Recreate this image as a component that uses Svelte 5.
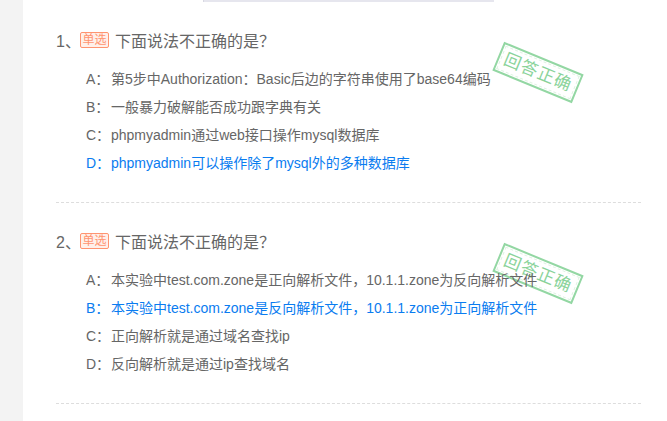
<script>
  const questions = [
    { n: 1, answer: 'D', options: [
      ['A', '第5步中Authorization：Basic后边的字符串使用了base64编码'],
      ['B', '一般暴力破解能否成功跟字典有关'],
      ['C', 'phpmyadmin通过web接口操作mysql数据库'],
      ['D', 'phpmyadmin可以操作除了mysql外的多种数据库']
    ]},
    { n: 2, answer: 'B', options: [
      ['A', '本实验中test.com.zone是正向解析文件，10.1.1.zone为反向解析文件'],
      ['B', '本实验中test.com.zone是反向解析文件，10.1.1.zone为正向解析文件'],
      ['C', '正向解析就是通过域名查找ip'],
      ['D', '反向解析就是通过ip查找域名']
    ]}
  ];
</script>

<div class="page">
  <aside class="side"></aside>
  <main class="main">
    <div class="topbox"></div>
    {#each questions as q}
      <section class="q">
        <div class="stamp"><span>回答正确</span></div>
        <h3 class="title"><span class="num">{q.n}、</span><span class="tag">单选</span><span class="text">下面说法不正确的是？</span></h3>
        <ul class="opts">
          {#each q.options as o}
            <li class:right={o[0] === q.answer}><span class="key">{o[0]}：</span><span>{o[1]}</span></li>
          {/each}
        </ul>
      </section>
    {/each}
  </main>
</div>

<style>
  :global(body) { margin: 0; background: #fff; }
  .page { display: flex; width: 667px; height: 421px; overflow: hidden; font-family: "Liberation Sans", "Noto Sans CJK SC", sans-serif; color: #666; }
  .side { width: 23px; flex: none; background: #f3f3f3; }
  .main { flex: 1; padding: 0 26px 0 33px; min-width: 0; }
  .topbox { box-sizing: border-box; width: 291px; height: 2px; margin-left: 147px; background: #e6e6ee; border-left: 1px solid #d8d8e2; }
  .q { position: relative; height: 201px; box-sizing: border-box; border-bottom: 1px dashed #ddd; padding-top: 27px; }
  .title { position: relative; display: flex; align-items: center; margin: 0; height: 21px; font-size: 16px; font-weight: normal; color: #666; }
  .num { width: 24px; }
  .tag { box-sizing: border-box; width: 29px; height: 16px; margin-right: 6px; border: 1px solid #ff9470; border-radius: 2px; background: #fff0ea; color: #ff9470; font-size: 12px; line-height: 14px; text-align: center; }
  .opts { position: relative; list-style: none; margin: 15px 0 0; padding: 0 0 0 30px; }
  .opts li { height: 28px; line-height: 28px; font-size: 14px; color: #666; white-space: nowrap; }
  .opts li.right { color: #0a7cf0; }
  .key { display: inline-block; width: 25px; }
  .stamp { position: absolute; left: 439px; top: 55px; width: 86px; height: 31px; box-sizing: border-box; border: 2px solid #93d7a3; outline: 1px dashed #dff3e3; outline-offset: -4px; color: #8ad39a; font-size: 17px; letter-spacing: 1px; line-height: 27px; text-align: center; white-space: nowrap; transform: rotate(22.4deg); }
</style>
